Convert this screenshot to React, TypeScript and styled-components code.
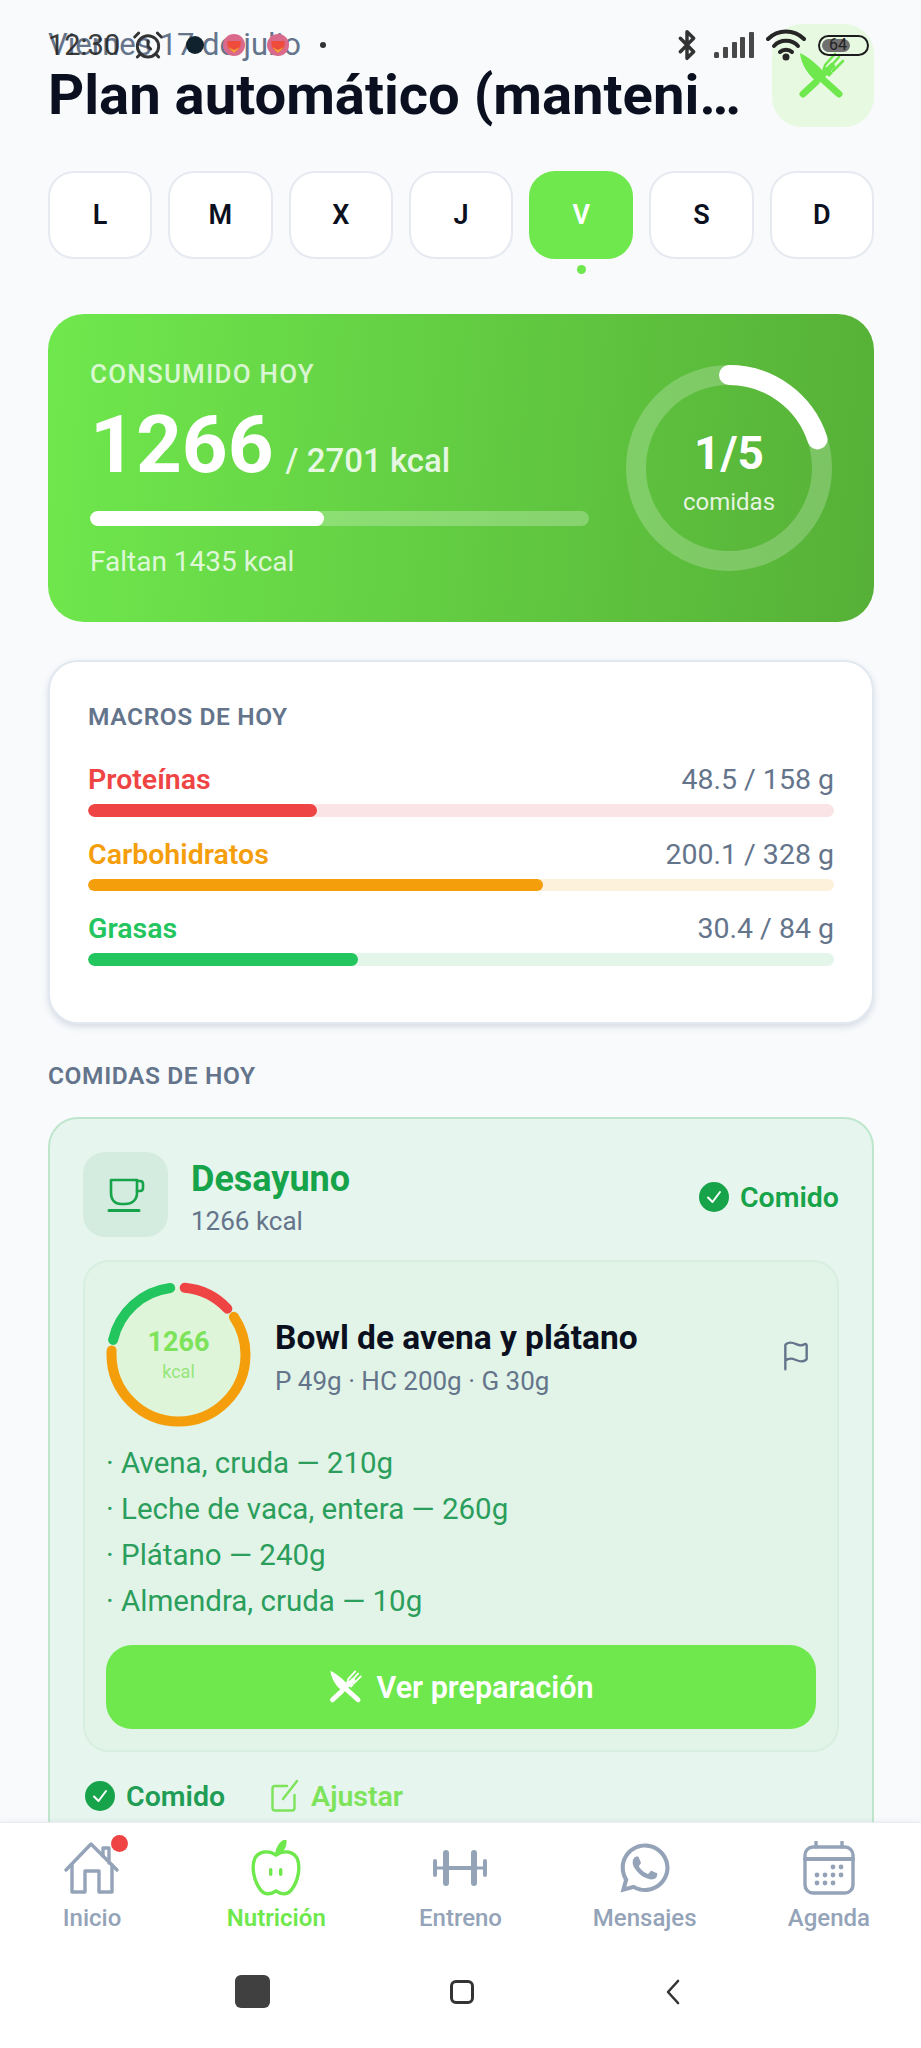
import React from 'react';
import styled, { createGlobalStyle } from 'styled-components';
import { AlarmClock, Bluetooth, Flag } from 'lucide-react';
import { FaWhatsapp } from 'react-icons/fa';

const GlobalStyle = createGlobalStyle`
  html, body {
    margin: 0;
    padding: 0;
    background: #f8fafc;
    font-family: Roboto, "Noto Sans", sans-serif;
  }
  * {
    box-sizing: border-box;
  }
`;

const Screen = styled.div`
  position: relative;
  width: 921px;
  height: 2048px;
  display: flex;
  flex-direction: column;
  overflow: hidden;
  background: #f8fafc;
`;

const StatusBar = styled.div`
  position: absolute;
  top: 28px;
  left: 48px;
  right: 52px;
  height: 34px;
  display: flex;
  align-items: center;
  justify-content: space-between;
  color: #262626;
  z-index: 2;
`;

const StatusGroup = styled.div<{ $gap?: number }>`
  display: flex;
  align-items: center;
  margin-left: ${(p) => p.$gap ?? 0}px;
`;

const Clock = styled.span`
  font-size: 29px;
  font-weight: 400;
  line-height: 34px;
  margin-right: 12px;
  opacity: 0.9;
`;

const NotifDot = styled.span<{ $color: string; $gap: number; $size: number }>`
  width: ${(p) => p.$size}px;
  height: ${(p) => p.$size}px;
  border-radius: 50%;
  margin-left: ${(p) => p.$gap}px;
  background: ${(p) => p.$color};
`;

const Battery = styled.div`
  position: relative;
  width: 51px;
  height: 21px;
  margin-left: 12px;
  padding: 2px;
  border: 2.5px solid #1c1c1c;
  border-radius: 11px;
  font-size: 16px;
`;

const BatteryFill = styled.div`
  width: 66%;
  height: 100%;
  border-radius: 7px;
  background: #707070;
`;

const BatteryText = styled.span`
  position: absolute;
  top: -1px;
  left: 9px;
  line-height: 18px;
  color: #222;
`;

const Content = styled.main`
  flex: 1;
  min-height: 0;
  overflow: hidden;
  padding: 23px 47px 0 48px;
`;

const Header = styled.header`
  display: flex;
  align-items: center;
  gap: 28px;
`;

const HeaderText = styled.div`
  flex: 1;
  min-width: 0;
`;

const DateLine = styled.div`
  font-size: 31px;
  line-height: 34px;
  color: #64748b;
  margin-top: 5px;
`;

const Title = styled.h1`
  margin: 0;
  font-size: 56.2px;
  line-height: 66px;
  font-weight: 700;
  color: #0b1020;
  white-space: nowrap;
  overflow: hidden;
  text-overflow: ellipsis;
`;

const HeaderIcon = styled.div`
  flex: none;
  width: 102px;
  height: 103px;
  border-radius: 30px;
  background: #e8f9e2;
  display: flex;
  align-items: center;
  justify-content: center;
  padding-right: 3px;
`;

const Days = styled.div`
  display: grid;
  grid-template-columns: repeat(7, 1fr);
  gap: 16px;
  margin-top: 43px;
`;

const Day = styled.div<{ $active?: boolean }>`
  position: relative;
  height: 88px;
  display: flex;
  align-items: center;
  justify-content: center;
  border-radius: 26px;
  font-size: 27px;
  font-weight: 600;
  color: ${(p) => (p.$active ? '#ffffff' : '#0b1020')};
  background: ${(p) => (p.$active ? '#6fe84d' : '#ffffff')};
  border: 2px solid ${(p) => (p.$active ? '#6fe84d' : '#e6eaf0')};

  ${(p) =>
    p.$active &&
    `&::after {
      content: '';
      position: absolute;
      left: 50%;
      bottom: -17px;
      width: 9px;
      height: 9px;
      margin-left: -4.5px;
      border-radius: 50%;
      background: #6fe84d;
    }`}
`;

const Hero = styled.section`
  margin-top: 55px;
  height: 308px;
  display: flex;
  align-items: center;
  justify-content: space-between;
  padding: 0 42px 0 42px;
  border-radius: 36px;
  background: linear-gradient(95deg, #6fe84d 0%, #56b037 100%);
  color: #ffffff;
`;

const HeroLeft = styled.div`
  width: 499px;
  padding-top: 2px;
`;

const HeroLabel = styled.div`
  font-size: 26px;
  line-height: 28px;
  font-weight: 500;
  letter-spacing: 1.2px;
  color: rgba(255, 255, 255, 0.75);
`;

const HeroValue = styled.div`
  display: flex;
  align-items: baseline;
  gap: 12px;
  margin-top: 13px;
  line-height: 88px;
`;

const HeroNumber = styled.span`
  font-size: 80px;
  font-weight: 700;
`;

const HeroGoal = styled.span`
  font-size: 33px;
  font-weight: 500;
  color: rgba(255, 255, 255, 0.85);
`;

const HeroTrack = styled.div`
  margin-top: 6px;
  height: 15px;
  border-radius: 8px;
  overflow: hidden;
  background: rgba(255, 255, 255, 0.25);
`;

const HeroFill = styled.div`
  height: 100%;
  border-radius: 8px;
  background: #ffffff;
`;

const HeroNote = styled.div`
  margin-top: 20px;
  font-size: 28px;
  line-height: 32px;
  color: rgba(255, 255, 255, 0.8);
`;

const RingBox = styled.div`
  position: relative;
  width: 206px;
  height: 206px;
  flex: none;
`;

const RingCenter = styled.div`
  position: absolute;
  inset: 0;
  padding-top: 6px;
  display: flex;
  flex-direction: column;
  align-items: center;
  justify-content: center;
`;

const RingValue = styled.div`
  font-size: 46px;
  line-height: 54px;
  font-weight: 700;
`;

const RingLabel = styled.div`
  font-size: 24px;
  line-height: 30px;
  margin-top: 7px;
  color: rgba(255, 255, 255, 0.85);
`;

const MacroCard = styled.section`
  margin-top: 38px;
  height: 364px;
  padding: 40px 38px 0 38px;
  border: 2px solid #e2e8f0;
  border-radius: 30px;
  background: #ffffff;
  box-shadow: 0 3px 6px rgba(100, 116, 139, 0.22);
`;

const SectionLabel = styled.div`
  font-size: 24.5px;
  line-height: 30px;
  font-weight: 600;
  letter-spacing: 0.6px;
  color: #64748b;
`;

const MacroList = styled.div`
  display: flex;
  flex-direction: column;
  gap: 21px;
  margin-top: 31px;
`;

const MacroHead = styled.div`
  display: flex;
  justify-content: space-between;
  align-items: baseline;
  line-height: 34px;
`;

const MacroName = styled.span<{ $color: string }>`
  font-size: 28.5px;
  font-weight: 600;
  color: ${(p) => p.$color};
`;

const MacroValue = styled.span`
  font-size: 28.5px;
  color: #64748b;
`;

const MacroTrack = styled.div<{ $color: string }>`
  margin-top: 7px;
  height: 12.5px;
  border-radius: 7px;
  overflow: hidden;
  background: ${(p) => p.$color};
`;

const MacroFill = styled.div<{ $color: string }>`
  height: 100%;
  border-radius: 7px;
  background: ${(p) => p.$color};
`;

const MealsLabel = styled(SectionLabel)`
  margin-top: 37px;
`;

const MealCard = styled.section`
  margin-top: 26px;
  padding: 33px 33px 40px 33px;
  border: 2px solid #bfe6cd;
  border-radius: 30px;
  background: #e6f5ee;
`;

const MealHead = styled.div`
  display: flex;
  align-items: center;
  gap: 23px;
`;

const MealIcon = styled.div`
  flex: none;
  width: 85px;
  height: 85px;
  border-radius: 22px;
  background: #d4ebe0;
  display: flex;
  align-items: center;
  justify-content: center;
`;

const MealInfo = styled.div`
  flex: 1;
  padding-top: 5px;
`;

const MealName = styled.div`
  font-size: 36px;
  line-height: 42px;
  font-weight: 700;
  color: #16a34a;
`;

const MealKcal = styled.div`
  font-size: 26px;
  line-height: 32px;
  margin-top: 5px;
  color: #64748b;
`;

const EatenTag = styled.div<{ $color: string; $offset?: number }>`
  display: flex;
  align-items: center;
  gap: 11px;
  margin-top: ${(p) => p.$offset ?? 0}px;
  font-size: 28.5px;
  font-weight: 600;
  color: ${(p) => p.$color};
`;

const CheckDot = styled.span`
  width: 30px;
  height: 30px;
  border-radius: 50%;
  background: #16a34a;
  display: flex;
  align-items: center;
  justify-content: center;
`;

const RecipeCard = styled.div`
  margin-top: 23px;
  padding: 20px 21px 21px 21px;
  border: 2px solid #d8efdf;
  border-radius: 26px;
  background: #e2f4e8;
`;

const RecipeTop = styled.div`
  display: flex;
  align-items: center;
  gap: 24px;
`;

const Donut = styled.div`
  position: relative;
  width: 145px;
  height: 145px;
  flex: none;
`;

const DonutCenter = styled.div`
  position: absolute;
  inset: 0;
  display: flex;
  flex-direction: column;
  align-items: center;
  justify-content: center;
`;

const DonutValue = styled.div`
  font-size: 27px;
  line-height: 30px;
  font-weight: 700;
  color: #7ce35a;
`;

const DonutUnit = styled.div`
  font-size: 18px;
  line-height: 20px;
  margin-top: 5px;
  color: #95e57a;
`;

const RecipeInfo = styled.div`
  flex: 1;
  margin-top: 6px;
`;

const RecipeName = styled.div`
  font-size: 33.5px;
  line-height: 40px;
  font-weight: 700;
  color: #0b1020;
`;

const RecipeMacros = styled.div`
  font-size: 26px;
  line-height: 32px;
  margin-top: 7px;
  color: #64748b;
`;

const FlagBox = styled.div`
  flex: none;
  color: #64748b;
  margin: 6px 4px 0 0;
`;

const Ingredients = styled.ul`
  list-style: none;
  margin: 13px 0 0 0;
  padding: 0;
`;

const Ingredient = styled.li`
  font-size: 29.5px;
  line-height: 46px;
  color: #2b9e5c;
`;

const PrepButton = styled.div`
  margin-top: 21px;
  height: 84px;
  border-radius: 26px;
  background: #6fe84d;
  color: #ffffff;
  display: flex;
  align-items: center;
  justify-content: center;
  gap: 14px;
  font-size: 30.5px;
  font-weight: 600;
`;

const MealActions = styled.div`
  display: flex;
  align-items: center;
  gap: 46px;
  margin-top: 27px;
  padding-left: 2px;
`;

const AdjustAction = styled.div`
  display: flex;
  align-items: center;
  gap: 12px;
  font-size: 28.5px;
  font-weight: 600;
  color: #7ce35a;
`;

const BottomArea = styled.footer`
  flex: none;
  height: 226px;
  position: relative;
  background: #ffffff;
  border-top: 1px solid #e9edf2;
  box-shadow: 0 -2px 4px rgba(100, 116, 139, 0.06);
`;

const TabBar = styled.nav`
  display: grid;
  grid-template-columns: repeat(5, 1fr);
  padding-top: 18px;
`;

const Tab = styled.div<{ $active?: boolean }>`
  display: flex;
  flex-direction: column;
  align-items: center;
  gap: 8px;
  font-size: 24px;
  line-height: 30px;
  font-weight: ${(p) => (p.$active ? 600 : 500)};
  color: ${(p) => (p.$active ? '#6fe84d' : '#94a3b8')};
`;

const TabIcon = styled.div`
  position: relative;
  width: 60px;
  height: 54px;
  display: flex;
  align-items: center;
  justify-content: center;
`;

const Badge = styled.span`
  position: absolute;
  top: -6px;
  right: -6px;
  width: 17px;
  height: 17px;
  border-radius: 50%;
  background: #ef4444;
`;

const SystemNav = styled.div`
  display: grid;
  grid-template-columns: 235px 35px 180px 24px 191px 16px;
  align-items: center;
  margin-top: 42px;
`;

const RecentKey = styled.span`
  grid-column: 2;
  width: 35px;
  height: 33px;
  border-radius: 6px;
  background: #404040;
`;

const HomeKey = styled.span`
  grid-column: 4;
  width: 24px;
  height: 24px;
  border: 3px solid #333333;
  border-radius: 6px;
`;

const BackKey = styled.svg`
  grid-column: 6;
`;

const UtensilsIcon: React.FC<{ color: string; size: number }> = ({ color, size }) => (
  <svg width={size} height={size} viewBox="0 0 48 48" fill="none">
    <path d="M2 1C12 6 24 16 28 24L21 31C10 24 3 12 2 1Z" fill={color} />
    <path d="M21 24L41 42" stroke={color} strokeWidth="7" strokeLinecap="round" />
    <path d="M5 42L18 30" stroke={color} strokeWidth="7" strokeLinecap="round" />
    <path d="M26 22L34 14" stroke={color} strokeWidth="6" strokeLinecap="round" />
    <path d="M27 13L37 2M31 16L41 5M35 19L45 9" stroke={color} strokeWidth="2.6" strokeLinecap="round" />
    <path d="M26 13L35 21L31 25L24 18Z" fill={color} />
  </svg>
);

const WifiIcon = () => (
  <svg width="40" height="32" viewBox="0 0 40 32" fill="none" stroke="#262626" strokeWidth="4" strokeLinecap="round">
    <path d="M2 10C12 0 28 0 38 10" />
    <path d="M8 17C14 10 26 10 32 17" />
    <path d="M14 23C17 20 23 20 26 23" />
    <circle cx="20" cy="28" r="1.5" fill="#262626" />
  </svg>
);

const SignalIcon = () => (
  <svg width="40" height="26" viewBox="0 0 40 26" fill="#484848">
    <rect x="0" y="20" width="5" height="6" rx="1.5" />
    <rect x="9" y="15" width="5" height="11" rx="1" />
    <rect x="18" y="10" width="5" height="16" rx="1" />
    <rect x="26" y="5" width="5" height="21" rx="1" />
    <rect x="35" y="0" width="5" height="26" rx="1" />
  </svg>
);

const BagIcon = () => (
  <svg width="24" height="24" viewBox="0 0 24 24">
    <circle cx="12" cy="12" r="11" fill="#d96a8c" />
    <path d="M5 8H19L18 15L12 20L6 15Z" fill="#ee4b3c" />
    <path d="M6 14L12 17L18 14L12 20Z" fill="#f2a33a" />
  </svg>
);

const CupIcon = () => (
  <svg width="38" height="34" viewBox="0 0 38 34" fill="none" stroke="#16a34a" strokeWidth="2.6" strokeLinecap="round" strokeLinejoin="round">
    <path d="M4 2H30V15C30 22 25 26 18 26H14C8 26 4 22 4 15Z" />
    <path d="M30 3H33C35 3 36 4 36 6V10C36 12 35 13 33 13H30" />
    <path d="M2 32.5H32" strokeWidth="3" />
  </svg>
);

const AdjustIcon = () => (
  <svg width="28" height="34" viewBox="0 0 28 34" fill="none" stroke="#7ce35a" strokeWidth="2.4" strokeLinecap="round" strokeLinejoin="round">
    <path d="M16 7H4C2.5 7 1.5 8 1.5 9.5V29C1.5 30.5 2.5 31.5 4 31.5H21C22.5 31.5 23.5 30.5 23.5 29V16" />
    <path d="M12 20L26 2" />
  </svg>
);

const HomeIcon = () => (
  <svg width="56" height="54" viewBox="0 0 56 54" fill="none" stroke="#94a3b8" strokeWidth="3.4" strokeLinecap="round" strokeLinejoin="round">
    <path d="M2 29L27 3L53 29" />
    <path d="M39 15V7H45V22" />
    <path d="M8 24V51H21V30H35V51H48V24" />
  </svg>
);

const AppleIcon = () => (
  <svg width="50" height="56" viewBox="0 0 50 56" fill="none" stroke="#6fe84d" strokeWidth="3.4" strokeLinecap="round" strokeLinejoin="round">
    <path d="M25 15C18 10 8 11 4 18C0 27 3 41 9 49C13 55 19 55 25 51C31 55 37 55 41 49C47 41 50 27 46 18C42 11 32 10 25 15Z" />
    <path d="M26 13C27 7 30 3 34 1C34 7 31 12 26 13Z" fill="#6fe84d" />
    <rect x="18" y="28" width="3.4" height="8" rx="1.7" fill="#6fe84d" stroke="none" />
    <rect x="28" y="28" width="3.4" height="8" rx="1.7" fill="#6fe84d" stroke="none" />
  </svg>
);

const DumbbellIcon = () => (
  <svg width="58" height="36" viewBox="0 0 58 36" fill="none" stroke="#94a3b8" strokeLinecap="round">
    <path d="M15 3V33M43 3V33" strokeWidth="6" />
    <path d="M4 11V25M54 11V25" strokeWidth="4" />
    <path d="M15 18H43" strokeWidth="4" strokeLinecap="butt" />
    <path d="M4 18H15M43 18H54" strokeWidth="3" strokeLinecap="butt" />
  </svg>
);

const CalendarIcon = () => (
  <svg width="52" height="54" viewBox="0 0 52 54" fill="none" stroke="#94a3b8" strokeWidth="3.4" strokeLinecap="round">
    <rect x="2" y="6" width="48" height="46" rx="8" />
    <path d="M2 18H50" strokeWidth="4" />
    <path d="M13 1V6M39 1V6" />
    <g fill="#94a3b8" stroke="none">
      {[
        [30, 26],
        [38, 26],
        [14, 34],
        [22, 34],
        [30, 34],
        [38, 34],
        [14, 42],
        [22, 42],
        [30, 42],
      ].map(([x, y]) => (
        <circle key={`${x}-${y}`} cx={x} cy={y} r="2.4" />
      ))}
    </g>
  </svg>
);

const CheckIcon = () => (
  <svg width="18" height="18" viewBox="0 0 18 18" fill="none" stroke="#ffffff" strokeWidth="2" strokeLinecap="round" strokeLinejoin="round">
    <path d="M3 9.5L7.5 14L15 4" />
  </svg>
);

const days = ['L', 'M', 'X', 'J', 'V', 'S', 'D'];

const macros = [
  { name: 'Proteínas', value: '48.5 / 158 g', pct: 30.7, color: '#ef4444', track: '#fbe4e6' },
  { name: 'Carbohidratos', value: '200.1 / 328 g', pct: 61, color: '#f59e0b', track: '#fdf1dc' },
  { name: 'Grasas', value: '30.4 / 84 g', pct: 36.2, color: '#22c55e', track: '#e4f6ea' },
];

const ringSegments = [
  { color: '#ef4444', start: 1.5, length: 11.5 },
  { color: '#f59e0b', start: 15.5, length: 60.5 },
  { color: '#22c55e', start: 78.5, length: 19.5 },
];

const ingredients = [
  'Avena, cruda — 210g',
  'Leche de vaca, entera — 260g',
  'Plátano — 240g',
  'Almendra, cruda — 10g',
];

const App: React.FC = () => {
  return (
    <Screen>
      <GlobalStyle />
      <StatusBar>
        <StatusGroup>
          <Clock>12:30</Clock>
          <AlarmClock size={32} strokeWidth={2.2} color="#333" />
          <NotifDot $color="#10222e" $gap={22} $size={18} />
          <StatusGroup $gap={18}>
            <BagIcon />
          </StatusGroup>
          <StatusGroup $gap={20}>
            <BagIcon />
          </StatusGroup>
          <NotifDot $color="#333" $gap={30} $size={6} />
        </StatusGroup>
        <StatusGroup>
          <Bluetooth size={32} strokeWidth={2.6} color="#333" />
          <StatusGroup $gap={11}>
            <SignalIcon />
          </StatusGroup>
          <StatusGroup $gap={12}>
            <WifiIcon />
          </StatusGroup>
          <Battery>
            <BatteryFill />
            <BatteryText>64</BatteryText>
          </Battery>
        </StatusGroup>
      </StatusBar>

      <Content>
        <Header>
          <HeaderText>
            <DateLine>Viernes 17 de julio</DateLine>
            <Title>Plan automático (mantenimiento)</Title>
          </HeaderText>
          <HeaderIcon>
            <UtensilsIcon color="#6fe84d" size={48} />
          </HeaderIcon>
        </Header>

        <Days>
          {days.map((day) => (
            <Day key={day} $active={day === 'V'}>
              {day}
            </Day>
          ))}
        </Days>

        <Hero>
          <HeroLeft>
            <HeroLabel>CONSUMIDO HOY</HeroLabel>
            <HeroValue>
              <HeroNumber>1266</HeroNumber>
              <HeroGoal>/ 2701 kcal</HeroGoal>
            </HeroValue>
            <HeroTrack>
              <HeroFill style={{ width: `${(1266 / 2701) * 100}%` }} />
            </HeroTrack>
            <HeroNote>Faltan 1435 kcal</HeroNote>
          </HeroLeft>
          <RingBox>
            <svg width="206" height="206" viewBox="0 0 206 206" fill="none">
              <circle cx="103" cy="103" r="93" stroke="rgba(255,255,255,0.22)" strokeWidth="20" />
              <circle
                cx="103"
                cy="103"
                r="93"
                stroke="#ffffff"
                strokeWidth="20"
                strokeLinecap="round"
                pathLength={100}
                strokeDasharray="20 100"
                transform="rotate(-90 103 103)"
              />
            </svg>
            <RingCenter>
              <RingValue>1/5</RingValue>
              <RingLabel>comidas</RingLabel>
            </RingCenter>
          </RingBox>
        </Hero>

        <MacroCard>
          <SectionLabel>MACROS DE HOY</SectionLabel>
          <MacroList>
            {macros.map((macro) => (
              <div key={macro.name}>
                <MacroHead>
                  <MacroName $color={macro.color}>{macro.name}</MacroName>
                  <MacroValue>{macro.value}</MacroValue>
                </MacroHead>
                <MacroTrack $color={macro.track}>
                  <MacroFill $color={macro.color} style={{ width: `${macro.pct}%` }} />
                </MacroTrack>
              </div>
            ))}
          </MacroList>
        </MacroCard>

        <MealsLabel>COMIDAS DE HOY</MealsLabel>

        <MealCard>
          <MealHead>
            <MealIcon>
              <CupIcon />
            </MealIcon>
            <MealInfo>
              <MealName>Desayuno</MealName>
              <MealKcal>1266 kcal</MealKcal>
            </MealInfo>
            <EatenTag $color="#16a34a" $offset={5}>
              <CheckDot>
                <CheckIcon />
              </CheckDot>
              Comido
            </EatenTag>
          </MealHead>

          <RecipeCard>
            <RecipeTop>
              <Donut>
                <svg width="145" height="145" viewBox="0 0 145 145" fill="none">
                  <circle cx="72.5" cy="72.5" r="67" fill="#dff5d9" />
                  {ringSegments.map((seg) => (
                    <circle
                      key={seg.color}
                      cx="72.5"
                      cy="72.5"
                      r="67"
                      stroke={seg.color}
                      strokeWidth="10"
                      strokeLinecap="round"
                      pathLength={100}
                      strokeDasharray={`${seg.length} 100`}
                      strokeDashoffset={-seg.start}
                      transform="rotate(-90 72.5 72.5)"
                    />
                  ))}
                </svg>
                <DonutCenter>
                  <DonutValue>1266</DonutValue>
                  <DonutUnit>kcal</DonutUnit>
                </DonutCenter>
              </Donut>
              <RecipeInfo>
                <RecipeName>Bowl de avena y plátano</RecipeName>
                <RecipeMacros>P 49g · HC 200g · G 30g</RecipeMacros>
              </RecipeInfo>
              <FlagBox>
                <Flag size={32} strokeWidth={1.8} />
              </FlagBox>
            </RecipeTop>

            <Ingredients>
              {ingredients.map((item) => (
                <Ingredient key={item}>· {item}</Ingredient>
              ))}
            </Ingredients>

            <PrepButton>
              <UtensilsIcon color="#ffffff" size={34} />
              Ver preparación
            </PrepButton>
          </RecipeCard>

          <MealActions>
            <EatenTag $color="#1f9d55">
              <CheckDot>
                <CheckIcon />
              </CheckDot>
              Comido
            </EatenTag>
            <AdjustAction>
              <AdjustIcon />
              Ajustar
            </AdjustAction>
          </MealActions>
        </MealCard>
      </Content>

      <BottomArea>
        <TabBar>
          <Tab>
            <TabIcon>
              <HomeIcon />
              <Badge />
            </TabIcon>
            Inicio
          </Tab>
          <Tab $active>
            <TabIcon>
              <AppleIcon />
            </TabIcon>
            Nutrición
          </Tab>
          <Tab>
            <TabIcon>
              <DumbbellIcon />
            </TabIcon>
            Entreno
          </Tab>
          <Tab>
            <TabIcon>
              <FaWhatsapp size={56} />
            </TabIcon>
            Mensajes
          </Tab>
          <Tab>
            <TabIcon>
              <CalendarIcon />
            </TabIcon>
            Agenda
          </Tab>
        </TabBar>
        <SystemNav>
          <RecentKey />
          <HomeKey />
          <BackKey width="16" height="26" viewBox="0 0 16 26" fill="none" stroke="#333" strokeWidth="2.6" strokeLinecap="round" strokeLinejoin="round">
            <path d="M13 2L3 13L13 24" />
          </BackKey>
        </SystemNav>
      </BottomArea>
    </Screen>
  );
};

export default App;
